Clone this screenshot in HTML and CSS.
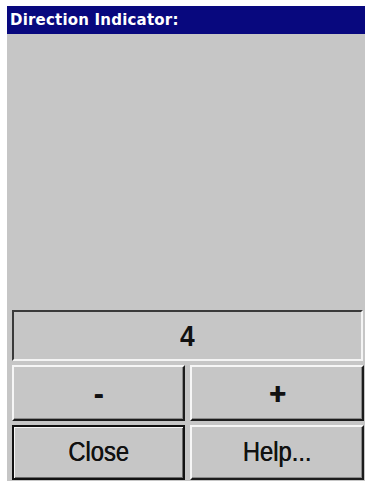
FILE: index.html
```html
<!DOCTYPE html>
<html>
<head>
<meta charset="utf-8">
<link rel="stylesheet" href="styles.css">
</head>
<body>
<div class="window">
  <div class="titlebar">Direction Indicator:</div>
  <div class="panel">
    <div class="readout"><span class="label">4</span></div>
    <div class="buttons">
      <div class="btn sym"><span class="label">-</span></div>
      <div class="btn sym"><span class="label">+</span></div>
      <div class="btn default"><span class="label">Close</span></div>
      <div class="btn"><span class="label">Help...</span></div>
    </div>
  </div>
</div>
</body>
</html>
```
FILE: styles.css
```css
html, body {
  margin: 0;
  padding: 0;
  background: #ffffff;
}
.window {
  margin: 6px 0 0 7px;
  width: 358px;
  height: 475px;
  display: flex;
  flex-direction: column;
  background: #c6c6c6;
}
.titlebar {
  height: 28px;
  box-sizing: border-box;
  background: #08087e;
  color: #ffffff;
  font-family: "DejaVu Sans", sans-serif;
  font-weight: bold;
  font-size: 15px;
  letter-spacing: 0.2px;
  line-height: 29px;
  padding-left: 3px;
}
.panel {
  flex: 1;
  display: flex;
  flex-direction: column;
  justify-content: flex-end;
  padding: 0 1px 1px 5px;
}
.readout {
  width: 351px;
  height: 51px;
  box-sizing: border-box;
  border-top: 2px solid #3a3a3a;
  border-left: 2px solid #3a3a3a;
  border-right: 2px solid #f4f4f4;
  border-bottom: 2px solid #f4f4f4;
  display: flex;
  align-items: center;
  justify-content: center;
  font-family: "Liberation Sans", Arial, sans-serif;
  font-weight: bold;
  font-size: 30px;
  color: #111;
  margin-bottom: 4px;
}
.label {
  display: inline-block;
  transform: scaleX(0.88);
}
.buttons {
  display: grid;
  grid-template-columns: 173px 174px;
  grid-template-rows: 56px 55px;
  column-gap: 5px;
  row-gap: 4px;
}
.btn {
  box-sizing: border-box;
  border-top: 2px solid #f6f6f6;
  border-left: 2px solid #f6f6f6;
  border-right: 2px solid #1c1c1c;
  border-bottom: 2px solid #1c1c1c;
  box-shadow: inset -1px -1px 0 #8a8a8a;
  display: flex;
  align-items: center;
  justify-content: center;
  font-family: "Liberation Sans", Arial, sans-serif;
  font-size: 27px;
  color: #111;
  text-shadow: 0.4px 0 0 #111;
}
.btn.sym {
  font-weight: bold;
  font-size: 32px;
  text-shadow: 1px 0 0 #111;
}
.btn.default {
  border: 2px solid #111;
  box-shadow: inset 1px 1px 0 #f6f6f6, inset -1px -1px 0 #6a6a6a;
}
```
